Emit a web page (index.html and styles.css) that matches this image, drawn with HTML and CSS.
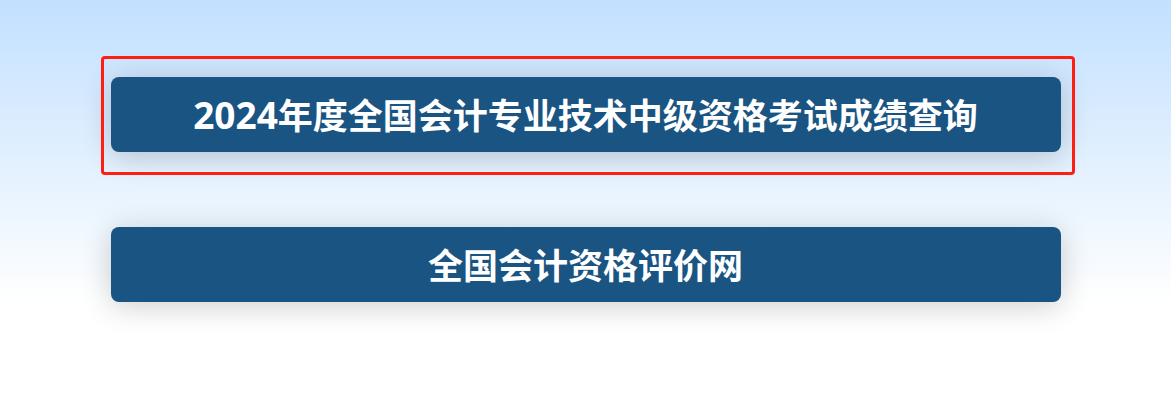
FILE: index.html
```html
<!DOCTYPE html>
<html lang="zh-CN">
<head>
<meta charset="utf-8">
<meta name="viewport" content="width=device-width, initial-scale=1">
<title>全国会计资格评价网</title>
<link rel="stylesheet" href="styles.css">
</head>
<body>
<main class="links">
  <div class="item highlight">
    <a class="link" href="#query"><span class="year">2024</span>年度全国会计专业技术中级资格考试成绩查询</a>
  </div>
  <div class="item">
    <a class="link" href="#home">全国会计资格评价网</a>
  </div>
</main>
</body>
</html>
```
FILE: styles.css
```css
* {
  box-sizing: border-box;
}

html {
  min-height: 100%;
  background: #fff;
}

body {
  margin: 0;
  min-height: 100vh;
  background: linear-gradient(180deg, #c2e0ff 0, #fff 304px);
  font-family: "Open Sans", "Noto Sans CJK SC", sans-serif;
}

.links {
  display: flex;
  flex-direction: column;
  gap: 75px;
  max-width: 950px;
  margin: 0 auto;
  padding-top: 77px;
}

.item {
  position: relative;
}

/* Red frame drawn over the surroundings of the marked link */
.highlight::after {
  content: "";
  position: absolute;
  inset: -21px -14px -23px -10px;
  border: 3px solid #ff1e14;
  border-radius: 4px;
  pointer-events: none;
}

.link {
  display: block;
  padding: 14px 16px 11px;
  border-radius: 8px;
  background: #1a5482;
  box-shadow: 0 4px 30px rgba(0, 0, 0, 0.2);
  color: #fff;
  font-size: 35px;
  font-weight: 700;
  line-height: 50px;
  text-align: center;
  text-decoration: none;
}

.year {
  font-size: 37px;
  line-height: 1;
}
```
